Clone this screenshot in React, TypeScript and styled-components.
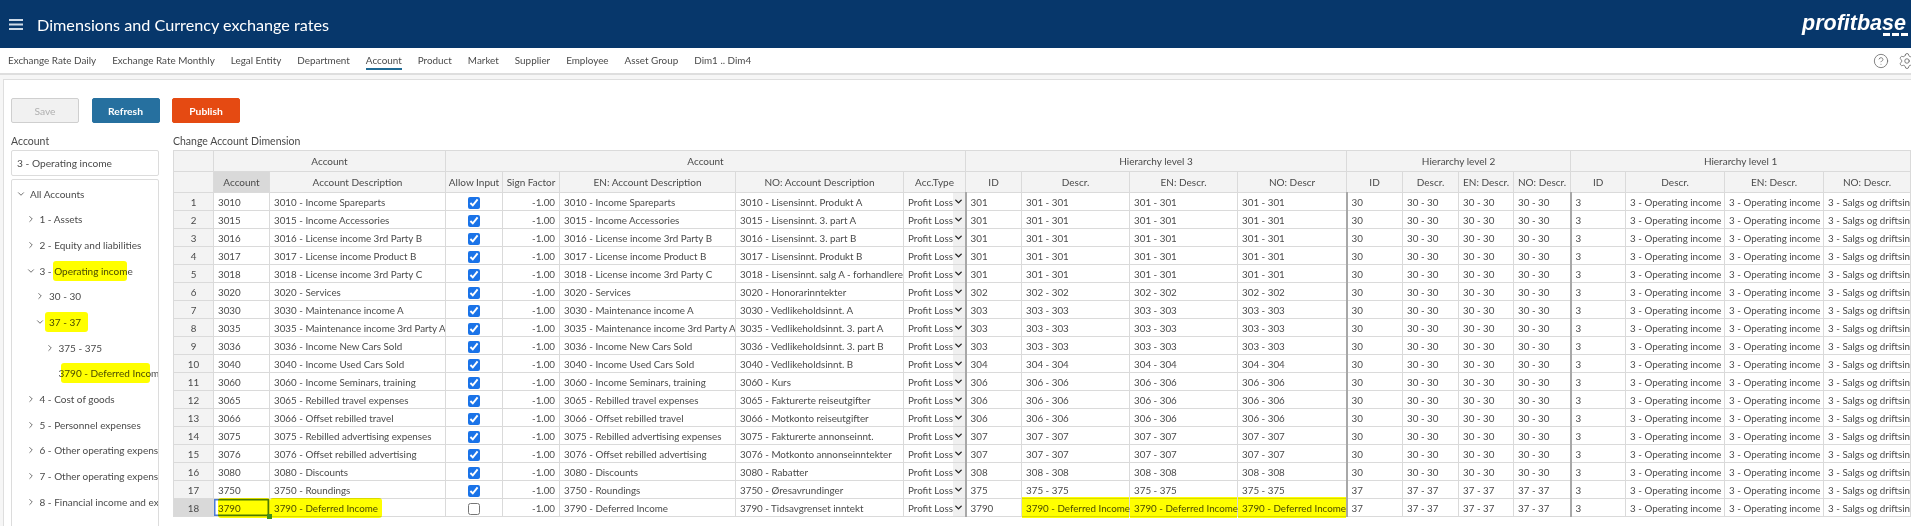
import React from "react"
import styled, { createGlobalStyle } from "styled-components"
import { ChevronDown, ChevronRight, CircleHelp, Settings } from "lucide-react"

const GlobalStyle = createGlobalStyle`
  html, body {
    margin: 0;
    height: 526px;
    overflow: hidden;
    background: #fff;
    font-family: Lato, "Open Sans", sans-serif;
    color: #4a4a4a;
  }
`

const TopBar = styled.header`
  height: 48px;
  background: #07376b;
  display: flex;
  align-items: center;
  justify-content: space-between;
  color: #fff;
`

const TitleGroup = styled.div`
  display: flex;
  align-items: center;
  padding-left: 9px;
  gap: 14px;
`

const Title = styled.h1`
  margin: 0;
  font-size: 16.2px;
  font-weight: 400;
`

const Logo = styled.div`
  position: relative;
  width: 109px;
  height: 30px;
  font-family: "Liberation Sans", sans-serif;
  font-size: 21.5px;
  line-height: 26px;
  font-weight: 700;
  font-style: italic;
  white-space: nowrap;
  margin-top: 2px;
`

const LogoDashes = styled.div`
  position: absolute;
  right: 3px;
  top: 23px;
  display: flex;
  gap: 2px;

  span {
    width: 7px;
    height: 3px;
    background: #fff;
  }
`

const NavBar = styled.nav`
  height: 25px;
  border-bottom: 2px solid #dedede;
  display: flex;
  align-items: stretch;
  justify-content: space-between;
  padding-left: 8px;
  background: #fff;
`

const NavLinks = styled.div`
  display: flex;
  gap: 16px;
`

const NavLink = styled.a<{ $active?: boolean }>`
  font-size: 9.9px;
  line-height: 25px;
  height: 20px;
  color: #4a4a4a;
  border-bottom: ${(p) => (p.$active ? "2px solid #1f6a94" : "2px solid transparent")};
  white-space: nowrap;
`

const NavIcons = styled.div`
  display: flex;
  align-items: center;
  gap: 9px;
  margin-right: -5px;
  color: #666;
`

const Gutter = styled.div`
  background: #f6f6f6;
  padding: 4px 0 0 3px;
  height: 447px;
`

const Panel = styled.main`
  background: #fff;
  border-top: 1px solid #dedede;
  border-left: 1px solid #dedede;
  height: 100%;
  padding: 18px 0 0 7px;
  box-sizing: border-box;
`

const Toolbar = styled.div`
  display: flex;
  gap: 12.5px;
  margin-bottom: 12px;
`

const ActionButton = styled.button<{ $bg: string; $disabled?: boolean }>`
  width: 68px;
  height: 25px;
  box-sizing: border-box;
  border: 1px solid ${(p) => (p.$disabled ? "#cfcfcf" : p.$bg)};
  border-radius: 2px;
  background: ${(p) => p.$bg};
  color: ${(p) => (p.$disabled ? "#b0b0b0" : "#fff")};
  font-family: inherit;
  font-size: 10.3px;
  font-weight: ${(p) => (p.$disabled ? 400 : 700)};
  padding: 0;
`

const Columns = styled.div`
  display: flex;
  gap: 14px;
`

const Sidebar = styled.aside`
  width: 148px;
  flex: none;
`

const Label = styled.div`
  font-size: 10.5px;
  line-height: 13px;
  height: 15px;
  color: #4a4a4a;
`

const AccountBox = styled.div`
  height: 26px;
  box-sizing: border-box;
  border: 1px solid #dcdcdc;
  border-radius: 2px;
  font-size: 10.2px;
  line-height: 24px;
  padding-left: 5px;
  margin-bottom: 3px;
`

const Tree = styled.div`
  height: 360px;
  box-sizing: border-box;
  border: 1px solid #dcdcdc;
  border-radius: 2px;
  padding-top: 1px;
  overflow: hidden;
`

const TreeRow = styled.div<{ $level: number }>`
  height: 25.65px;
  display: flex;
  align-items: center;
  gap: 4px;
  padding-left: ${(p) => 4 + p.$level * 9.5}px;
  font-size: 10px;
  white-space: nowrap;
`

const TreeArrow = styled.span`
  width: 10px;
  flex: none;
  display: flex;
  color: #555;
`

const Marked = styled.span`
  position: relative;
`

const Mark = styled.span<{ $left: number; $width: number }>`
  position: absolute;
  top: -4px;
  bottom: -4px;
  left: ${(p) => p.$left}px;
  width: ${(p) => p.$width}px;
  background: #ffff00;
  mix-blend-mode: multiply;
  border-radius: 3px;
`

const TableArea = styled.div`
  flex: 1;
  min-width: 0;
`

const Grid = styled.table`
  table-layout: fixed;
  border-collapse: collapse;
  width: 1736px;
  font-size: 9.8px;
`

const GroupCell = styled.th`
  height: 20px;
  padding: 0;
  background: #f3f3f3;
  border: 1px solid #dadada;
  font-weight: 400;
  font-size: 10px;
  line-height: 14px;
  color: #4a4a4a;
  white-space: nowrap;
  overflow: hidden;
`

const HeadCell = styled(GroupCell)<{ $active?: boolean }>`
  background: ${(p) => (p.$active ? "#d9d9d9" : "#f3f3f3")};
`

const IndexCell = styled.td<{ $active?: boolean }>`
  height: 17px;
  padding: 0;
  line-height: 14px;
  text-align: center;
  background: ${(p) => (p.$active ? "#d9d9d9" : "#f3f3f3")};
  border: 1px solid #dadada;
`

const Cell = styled.td<{ $first?: boolean; $right?: boolean; $center?: boolean; $open?: boolean }>`
  height: 17px;
  padding: 0 4px;
  border: 1px solid #dadada;
  border-left: ${(p) => (p.$first ? "2px solid #a8a8a8" : "1px solid #dadada")};
  text-align: ${(p) => (p.$right ? "right" : p.$center ? "center" : "left")};
  white-space: nowrap;
  overflow: ${(p) => (p.$open ? "visible" : "hidden")};
  line-height: 14px;
`

const YellowCell = styled(Cell)`
  position: relative;
  overflow: visible;

  &::after {
    content: "";
    position: absolute;
    inset: -2px 0 -2px 0;
    background: #ffff00;
    mix-blend-mode: multiply;
  }
`

const SelectedCell = styled(Cell)`
  position: relative;
  overflow: visible;
  box-shadow: inset 0 0 0 1.5px #4b7bd6;
`

const FillHandle = styled.span`
  position: absolute;
  right: -3px;
  bottom: -3px;
  width: 5px;
  height: 5px;
  background: #3f8f1c;
  z-index: 2;
`

const Check = styled.input`
  display: block;
  width: 12px;
  height: 12px;
  margin: 2px auto 0;
  accent-color: #1a73e8;
`

const TypeCell = styled.td`
  height: 17px;
  padding: 0 0 0 4px;
  border: 1px solid #dadada;
  white-space: nowrap;
  overflow: hidden;
  line-height: 14px;
`

const TypeValue = styled.div`
  display: flex;
  align-items: center;
  justify-content: space-between;
  height: 17px;
`

const TypeArrow = styled.span`
  width: 13px;
  height: 17px;
  display: flex;
  align-items: center;
  justify-content: center;
  background: #f0f0f0;
  color: #222;
`

const widths = [40, 56, 176, 57, 57, 176, 168, 62, 56, 108, 108, 109, 56, 56, 55, 57, 55, 99, 99, 87]

type Account = { id: string; name: string; no: string; l3: string }

const accounts: Account[] = [
  { id: "3010", name: "Income Spareparts", no: "Lisensinnt. Produkt A", l3: "301" },
  { id: "3015", name: "Income Accessories", no: "Lisensinnt. 3. part A", l3: "301" },
  { id: "3016", name: "License income 3rd Party B", no: "Lisensinnt. 3. part B", l3: "301" },
  { id: "3017", name: "License income Product B", no: "Lisensinnt. Produkt B", l3: "301" },
  { id: "3018", name: "License income 3rd Party C", no: "Lisensinnt. salg A - forhandlere", l3: "301" },
  { id: "3020", name: "Services", no: "Honorarinntekter", l3: "302" },
  { id: "3030", name: "Maintenance income A", no: "Vedlikeholdsinnt. A", l3: "303" },
  { id: "3035", name: "Maintenance income 3rd Party A", no: "Vedlikeholdsinnt. 3. part A", l3: "303" },
  { id: "3036", name: "Income New Cars Sold", no: "Vedlikeholdsinnt. 3. part B", l3: "303" },
  { id: "3040", name: "Income Used Cars Sold", no: "Vedlikeholdsinnt. B", l3: "304" },
  { id: "3060", name: "Income Seminars, training", no: "Kurs", l3: "306" },
  { id: "3065", name: "Rebilled travel expenses", no: "Fakturerte reiseutgifter", l3: "306" },
  { id: "3066", name: "Offset rebilled travel", no: "Motkonto reiseutgifter", l3: "306" },
  { id: "3075", name: "Rebilled advertising expenses", no: "Fakturerte annonseinnt.", l3: "307" },
  { id: "3076", name: "Offset rebilled advertising", no: "Motkonto annonseinntekter", l3: "307" },
  { id: "3080", name: "Discounts", no: "Rabatter", l3: "308" },
  { id: "3750", name: "Roundings", no: "Øresavrundinger", l3: "375" },
  { id: "3790", name: "Deferred Income", no: "Tidsavgrenset inntekt", l3: "3790" },
]

const navItems = [
  "Exchange Rate Daily",
  "Exchange Rate Monthly",
  "Legal Entity",
  "Department",
  "Account",
  "Product",
  "Market",
  "Supplier",
  "Employee",
  "Asset Group",
  "Dim1 .. Dim4",
]

const subHeads = [
  "Allow Input",
  "Sign Factor",
  "EN: Account Description",
  "NO: Account Description",
  "Acc.Type",
  "ID",
  "Descr.",
  "EN: Descr.",
  "NO: Descr",
  "ID",
  "Descr.",
  "EN: Descr.",
  "NO: Descr.",
  "ID",
  "Descr.",
  "EN: Descr.",
  "NO: Descr.",
]

const Arrow = ({ open }: { open?: boolean }) => (
  <TreeArrow>{open ? <ChevronDown size={10} strokeWidth={2} /> : <ChevronRight size={10} strokeWidth={2} />}</TreeArrow>
)

const AccountRow = ({ account, index }: { account: Account; index: number }) => {
  const full = `${account.id} - ${account.name}`
  const last = index === 17
  const l3Text = `${account.l3} - ${account.l3}`
  const l2 = index >= 16 ? "37" : "30"
  return (
    <tr>
      <IndexCell $active={last}>{index + 1}</IndexCell>
      {last ? (
        <SelectedCell>
          <Marked>
            {account.id}
            <Mark $left={0} $width={52} />
          </Marked>
          <FillHandle />
        </SelectedCell>
      ) : (
        <Cell>{account.id}</Cell>
      )}
      {last ? (
        <Cell $open>
          <Marked>
            {full}
            <Mark $left={-4} $width={112} />
          </Marked>
        </Cell>
      ) : (
        <Cell>{full}</Cell>
      )}
      <Cell $center>
        <Check type="checkbox" checked={!last} readOnly />
      </Cell>
      <Cell $right>-1.00</Cell>
      <Cell>{full}</Cell>
      <Cell>{`${account.id} - ${account.no}`}</Cell>
      <TypeCell>
        <TypeValue>
          Profit Loss
          <TypeArrow>
            <ChevronDown size={11} strokeWidth={3} />
          </TypeArrow>
        </TypeValue>
      </TypeCell>
      <Cell $first>{account.l3}</Cell>
      {last ? (
        <>
          <YellowCell>{full}</YellowCell>
          <YellowCell>{full}</YellowCell>
          <YellowCell>{full}</YellowCell>
        </>
      ) : (
        <>
          <Cell>{l3Text}</Cell>
          <Cell>{l3Text}</Cell>
          <Cell>{l3Text}</Cell>
        </>
      )}
      <Cell $first>{l2}</Cell>
      <Cell>{`${l2} - ${l2}`}</Cell>
      <Cell>{`${l2} - ${l2}`}</Cell>
      <Cell>{`${l2} - ${l2}`}</Cell>
      <Cell $first>3</Cell>
      <Cell>3 - Operating income</Cell>
      <Cell>3 - Operating income</Cell>
      <Cell>3 - Salgs og driftsinntekter</Cell>
    </tr>
  )
}

const App = () => {
  return (
    <>
      <GlobalStyle />
      <TopBar>
        <TitleGroup>
          <svg width="14" height="11" viewBox="0 0 14 11" fill="#cfdbe8">
            <rect width="14" height="2" />
            <rect y="4.5" width="14" height="2" />
            <rect y="9" width="14" height="2" />
          </svg>
          <Title>Dimensions and Currency exchange rates</Title>
        </TitleGroup>
        <Logo>
          profitbase
          <LogoDashes>
            <span />
            <span />
            <span />
          </LogoDashes>
        </Logo>
      </TopBar>
      <NavBar>
        <NavLinks>
          {navItems.map((item) => (
            <NavLink key={item} $active={item === "Account"}>
              {item}
            </NavLink>
          ))}
        </NavLinks>
        <NavIcons>
          <CircleHelp size={16} strokeWidth={1.2} />
          <Settings size={18} strokeWidth={1.1} />
        </NavIcons>
      </NavBar>
      <Gutter>
        <Panel>
          <Toolbar>
            <ActionButton $bg="#f1f1f1" $disabled>
              Save
            </ActionButton>
            <ActionButton $bg="#26709f">Refresh</ActionButton>
            <ActionButton $bg="#e54a12">Publish</ActionButton>
          </Toolbar>
          <Columns>
            <Sidebar>
              <Label>Account</Label>
              <AccountBox>3 - Operating income</AccountBox>
              <Tree>
                <TreeRow $level={0}>
                  <Arrow open />
                  All Accounts
                </TreeRow>
                <TreeRow $level={1}>
                  <Arrow />1 - Assets
                </TreeRow>
                <TreeRow $level={1}>
                  <Arrow />2 - Equity and liabilities
                </TreeRow>
                <TreeRow $level={1}>
                  <Arrow open />
                  <Marked>
                    3 - Operating income
                    <Mark $left={13} $width={74} />
                  </Marked>
                </TreeRow>
                <TreeRow $level={2}>
                  <Arrow />
                  30 - 30
                </TreeRow>
                <TreeRow $level={2}>
                  <Arrow open />
                  <Marked>
                    37 - 37
                    <Mark $left={-4} $width={43} />
                  </Marked>
                </TreeRow>
                <TreeRow $level={3}>
                  <Arrow />
                  375 - 375
                </TreeRow>
                <TreeRow $level={3}>
                  <TreeArrow />
                  <Marked>
                    3790 - Deferred Income
                    <Mark $left={2} $width={89} />
                  </Marked>
                </TreeRow>
                <TreeRow $level={1}>
                  <Arrow />4 - Cost of goods
                </TreeRow>
                <TreeRow $level={1}>
                  <Arrow />5 - Personnel expenses
                </TreeRow>
                <TreeRow $level={1}>
                  <Arrow />6 - Other operating expenses
                </TreeRow>
                <TreeRow $level={1}>
                  <Arrow />7 - Other operating expenses
                </TreeRow>
                <TreeRow $level={1}>
                  <Arrow />8 - Financial income and expenses
                </TreeRow>
              </Tree>
            </Sidebar>
            <TableArea>
              <Label>Change Account Dimension</Label>
              <Grid>
                <colgroup>
                  {widths.map((w, i) => (
                    <col key={i} width={w} />
                  ))}
                </colgroup>
                <thead>
                  <tr>
                    <GroupCell />
                    <GroupCell colSpan={2}>Account</GroupCell>
                    <GroupCell colSpan={5}>Account</GroupCell>
                    <GroupCell colSpan={4}>Hierarchy level 3</GroupCell>
                    <GroupCell colSpan={4}>Hierarchy level 2</GroupCell>
                    <GroupCell colSpan={4}>Hierarchy level 1</GroupCell>
                  </tr>
                  <tr>
                    <HeadCell />
                    <HeadCell $active>Account</HeadCell>
                    <HeadCell>Account Description</HeadCell>
                    {subHeads.map((h, i) => (
                      <HeadCell key={i}>{h}</HeadCell>
                    ))}
                  </tr>
                </thead>
                <tbody>
                  {accounts.map((a, i) => (
                    <AccountRow key={a.id} account={a} index={i} />
                  ))}
                </tbody>
              </Grid>
            </TableArea>
          </Columns>
        </Panel>
      </Gutter>
    </>
  )
}

export default App
